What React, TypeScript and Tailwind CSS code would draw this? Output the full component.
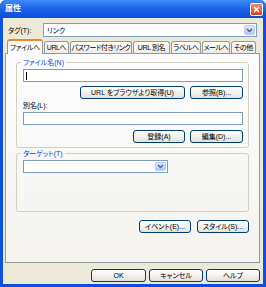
import React from "react";

const font =
  "font-['Liberation_Sans','Noto_Sans_CJK_JP',sans-serif] [font-feature-settings:'palt']";

function Button({ label, className = "" }: { label: string; className?: string }) {
  return (
    <div
      className={`flex h-[13px] items-center justify-center whitespace-nowrap rounded-[3px] border border-[#003c74] bg-linear-to-b from-white to-[#e4e2d8] text-[7px] leading-none text-black ${className}`}
    >
      {label}
    </div>
  );
}

function DropArrow() {
  return (
    <div className="flex h-full w-[11px] items-center justify-center rounded-[2px] border border-[#b9cdf8] bg-linear-to-b from-[#dce7fe] to-[#b2c7f6]">
      <svg width="7" height="5" viewBox="0 0 7 5">
        <path d="M1 1 L3.5 3.5 L6 1" stroke="#4d6185" strokeWidth="1.4" fill="none" />
      </svg>
    </div>
  );
}

const tabs = [
  { label: "URLへ", w: "w-[25px]" },
  { label: "パスワード付きリンク", w: "w-[62px]" },
  { label: "URL 別名", w: "w-[37px]" },
  { label: "ラベルへ", w: "w-[30px]" },
  { label: "メールへ", w: "w-[28px]" },
  { label: "その他", w: "w-[25px]" },
];

export default function App() {
  return (
    <div className={`flex h-[287px] w-[266px] flex-col overflow-hidden rounded-t-[6px] bg-[#0a52dc] ${font}`}>
      {/* title bar */}
      <div className="flex h-[18px] shrink-0 items-center justify-between bg-linear-to-b from-[#3d8af7] via-[#1a62e6] to-[#0a4fd8] pl-[5px] pr-[3px]">
        <span className="text-[8px] font-bold leading-none text-white">属性</span>
        <div className="flex h-[13px] w-[13px] items-center justify-center rounded-[2px] border border-white bg-linear-to-b from-[#f08a62] to-[#d5401c]">
          <svg width="7" height="7" viewBox="0 0 7 7">
            <path d="M1 1 L6 6 M6 1 L1 6" stroke="white" strokeWidth="1.5" />
          </svg>
        </div>
      </div>

      {/* body */}
      <div className="mx-[3px] mb-[3px] flex flex-1 flex-col bg-[#ece9d8]">
        <div className="mt-[5px] flex h-[14px] items-center pl-[5px] pr-[6px]">
          <span className="w-[35px] text-[7px] leading-none">タグ(T):</span>
          <div className="flex h-full flex-1 items-center border border-[#7f9db9] bg-white p-[1px]">
            <span className="flex-1 pl-[2px] text-[7px] leading-none">リンク</span>
            <DropArrow />
          </div>
        </div>

        {/* tabs */}
        <div className="mt-[2px] flex h-[14px] items-end gap-[1px] pl-[4px]">
          <div className="relative z-10 -mb-[1px] flex h-[15px] w-[36px] items-center justify-center whitespace-nowrap rounded-t-[3px] border-x border-t-2 border-[#919b9c] border-t-[#e68b2c] bg-[#fcfcfe] text-[7px] leading-none tracking-[-0.3px]">
            ファイルへ
          </div>
          {tabs.map((t) => (
            <div
              key={t.label}
              className={`flex h-[12px] ${t.w} items-center justify-center whitespace-nowrap rounded-t-[3px] border-x border-t border-[#919b9c] bg-linear-to-b from-white to-[#ecebe6] text-[7px] leading-none tracking-[-0.4px]`}
            >
              {t.label}
            </div>
          ))}
        </div>

        {/* panel */}
        <div className="ml-[2px] mr-[3px] flex h-[210px] flex-col border border-[#919b9c] bg-linear-to-b from-[#fcfcfe] to-[#f4f3ee] px-[10px] pt-[4px]">
          <fieldset className="rounded-[3px] border border-[#d0d0bf] pb-[4px] pl-[6px] pr-[5px]">
            <legend className="ml-[-2px] px-[2px] text-[7px] leading-[9px] text-[#0046d5]">ファイル名(N)</legend>
            <div className="mt-[2px] flex h-[13px] items-center border border-[#7f9db9] bg-white pl-[2px]">
              <div className="h-[8px] w-[1px] bg-black" />
            </div>
            <div className="mt-[4px] flex justify-end gap-[5px]">
              <Button label="URL をブラウザより取得(U)" className="w-[105px]" />
              <Button label="参照(B)..." className="w-[53px]" />
            </div>
            <div className="mt-[2px] text-[7px] leading-[9px]">別名(L):</div>
            <div className="mt-[2px] h-[13px] border border-[#7f9db9] bg-white" />
            <div className="mt-[5px] flex justify-end gap-[5px]">
              <Button label="登録(A)" className="w-[52px]" />
              <Button label="編集(D)..." className="w-[53px]" />
            </div>
          </fieldset>

          <fieldset className="mt-[1px] rounded-[3px] border border-[#d0d0bf] pb-[38px] pl-[6px] pr-[5px]">
            <legend className="ml-[-2px] px-[2px] text-[7px] leading-[9px] text-[#0046d5]">ターゲット(T)</legend>
            <div className="mt-[2px] flex h-[13px] w-[145px] items-center border border-[#7f9db9] bg-white p-[1px]">
              <span className="flex-1" />
              <DropArrow />
            </div>
          </fieldset>

          <div className="mt-[8px] flex justify-end gap-[6px]">
            <Button label="イベント(E)..." className="w-[52px]" />
            <Button label="スタイル(S)..." className="w-[52px]" />
          </div>
        </div>

        {/* bottom buttons */}
        <div className="mt-[6px] flex justify-end gap-[3px] pr-[3px]">
          <Button label="OK" className="w-[55px]" />
          <Button label="キャンセル" className="w-[54px]" />
          <Button label="ヘルプ" className="w-[54px]" />
        </div>
      </div>
    </div>
  );
}
